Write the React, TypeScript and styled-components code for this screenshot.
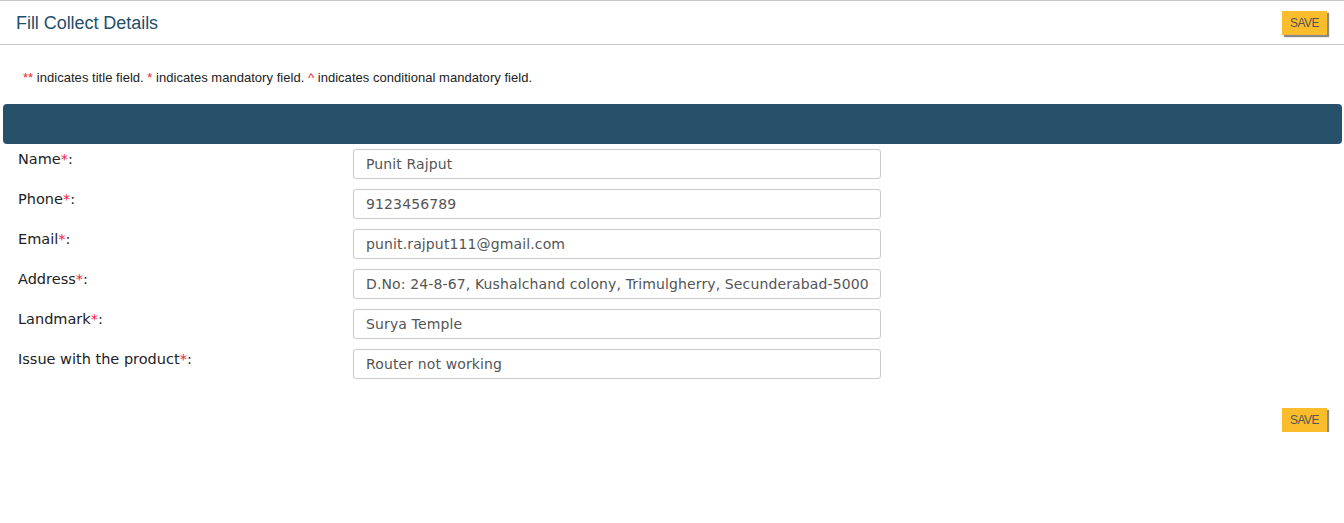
import React from "react";
import styled, { createGlobalStyle } from "styled-components";

const Global = createGlobalStyle`
  html, body { margin: 0; padding: 0; background: #fff; }
  body { font-family: "Liberation Sans", Arial, sans-serif; }
  * { box-sizing: border-box; }
`;

const Page = styled.div`
  width: 1344px;
  border-top: 1px solid #c8c8c8;
`;

const Header = styled.div`
  height: 44px;
  border-bottom: 1px solid #c8c8c8;
  display: flex;
  align-items: center;
  justify-content: space-between;
  padding: 0 17px 0 16px;
`;

const Title = styled.h1`
  margin: 0;
  font-family: "Liberation Sans", Arial, sans-serif;
  font-weight: normal;
  font-size: 18px;
  letter-spacing: -0.05px;
  color: #1f4f6b;
  padding-top: 2px;
`;

const SaveButton = styled.button`
  width: 45px;
  height: 24px;
  border: none;
  background: #fbbd2c;
  color: #555;
  font-family: "Liberation Sans", Arial, sans-serif;
  font-size: 12px;
  letter-spacing: -0.5px;
  padding: 0;
  box-shadow: 2px 2px 1px #8a8a8a;
  cursor: pointer;
`;

const Legend = styled.p`
  margin: 0;
  padding: 25px 0 0 23px;
  height: 59px;
  font-size: 13px;
  letter-spacing: 0.03px;
  line-height: 15px;
  color: #222;
`;

const Red = styled.span`
  color: #e8242c;
`;

const Bar = styled.div`
  margin: 0 2px 0 3px;
  height: 40px;
  background: #27506a;
  border-radius: 4px;
`;

const Form = styled.div`
  display: flex;
  flex-direction: column;
  gap: 10px;
  padding: 5px 0 0 18px;
`;

const Row = styled.div`
  display: grid;
  grid-template-columns: 335px 528px;
  align-items: start;
`;

const Label = styled.label`
  font-family: "DejaVu Sans", Verdana, sans-serif;
  font-size: 14.5px;
  line-height: 17px;
  color: #222;
  padding-top: 2px;
`;

const Star = styled.span`
  color: #f02040;
`;

const Input = styled.input`
  height: 30px;
  width: 528px;
  border: 1px solid #cbcbcb;
  border-radius: 3px;
  padding: 0 12px;
  font-family: "DejaVu Sans", Verdana, sans-serif;
  font-size: 14px;
  letter-spacing: 0.13px;
  color: #555;
  background: #fff;
  outline: none;
`;

const Footer = styled.div`
  display: flex;
  justify-content: flex-end;
  padding: 29px 17px 0 0;
`;

const fields: [string, string][] = [
  ["Name", "Punit Rajput"],
  ["Phone", "9123456789"],
  ["Email", "punit.rajput111@gmail.com"],
  ["Address", "D.No: 24-8-67, Kushalchand colony, Trimulgherry, Secunderabad-5000"],
  ["Landmark", "Surya Temple"],
  ["Issue with the product", "Router not working"],
];

export default function App() {
  return (
    <Page>
      <Global />
      <Header>
        <Title>Fill Collect Details</Title>
        <SaveButton>SAVE</SaveButton>
      </Header>
      <Legend>
        <Red>**</Red> indicates title field. <Red>*</Red> indicates mandatory field.{" "}
        <Red>^</Red> indicates conditional mandatory field.
      </Legend>
      <Bar />
      <Form>
        {fields.map(([label, value]) => (
          <Row key={label}>
            <Label>
              {label}
              <Star>*</Star>:
            </Label>
            <Input defaultValue={value} />
          </Row>
        ))}
      </Form>
      <Footer>
        <SaveButton>SAVE</SaveButton>
      </Footer>
    </Page>
  );
}
